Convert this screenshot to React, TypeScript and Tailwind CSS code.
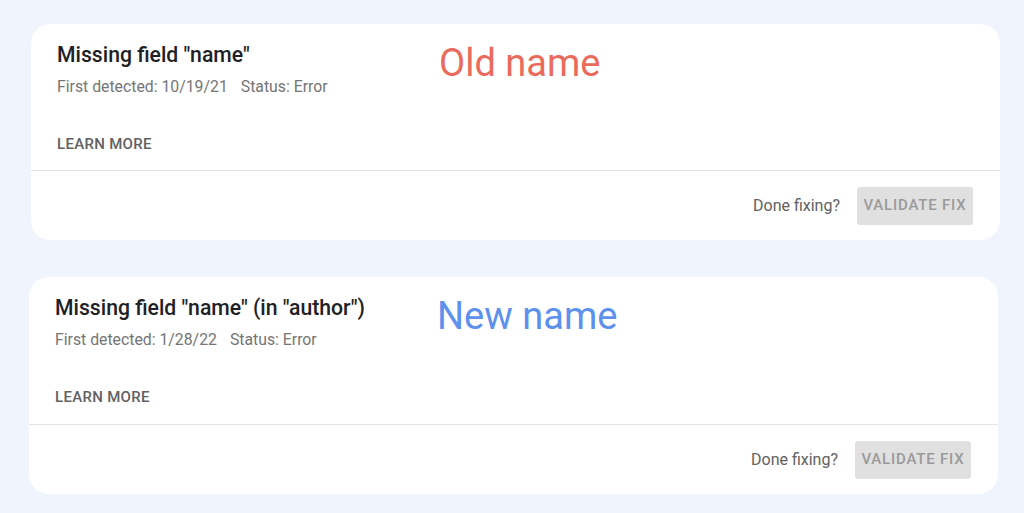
import React from 'react';

type IssueCardProps = {
  title: string;
  detected: string;
  label: string;
  labelColor: string;
  shift: string;
  headerHeight: string;
};

// One Search Console style issue card with an annotation to the right of the title.
function IssueCard({ title, detected, label, labelColor, shift, headerHeight }: IssueCardProps) {
  return (
    <div className={'w-[969px] overflow-hidden rounded-[20px] bg-white ' + shift}>
      <div className={'border-b border-[#e3e3e3] pl-[26px] pt-[18px] ' + headerHeight}>
        <div className="flex">
          <div className="w-[382px]">
            <div className="text-[21.2px] font-medium leading-[26px] text-[#202124]">{title}</div>
            <div className="mt-[9px] text-[15.8px] leading-[20px] text-[#757575]">
              First detected: {detected}
              <span className="ml-[13px]">Status: Error</span>
            </div>
          </div>
          <div className={'mt-[-1px] text-[38px] leading-[44px] ' + labelColor}>{label}</div>
        </div>
        <div className="mt-[37px] text-[15px] font-medium leading-[20px] tracking-[0.3px] text-[#616161]">
          LEARN MORE
        </div>
      </div>
      <div className="flex h-[69px] items-center justify-end pr-[27px]">
        <span className="text-[16px] text-[#616161]">Done fixing?</span>
        <span className="ml-[17px] flex h-[38px] w-[116px] items-center justify-center rounded-[3px] bg-[#e0e0e0] text-[15px] font-medium tracking-[0.8px] text-[#9a9a9a]">
          VALIDATE FIX
        </span>
      </div>
    </div>
  );
}

export default function App() {
  return (
    <div
      className="h-[513px] w-[1024px] overflow-hidden bg-[#f0f4fc] pt-[24px]"
      style={{ fontFamily: 'Roboto, "Noto Sans", sans-serif' }}
    >
      <IssueCard
        title={'Missing field "name"'}
        detected="10/19/21"
        label="Old name"
        labelColor="text-[#ea6a5c]"
        shift="ml-[31px]"
        headerHeight="h-[147px]"
      />
      <IssueCard
        title={'Missing field "name" (in "author")'}
        detected="1/28/22"
        label="New name"
        labelColor="text-[#5e90ee]"
        shift="ml-[29px] mt-[37px]"
        headerHeight="h-[148px]"
      />
    </div>
  );
}
